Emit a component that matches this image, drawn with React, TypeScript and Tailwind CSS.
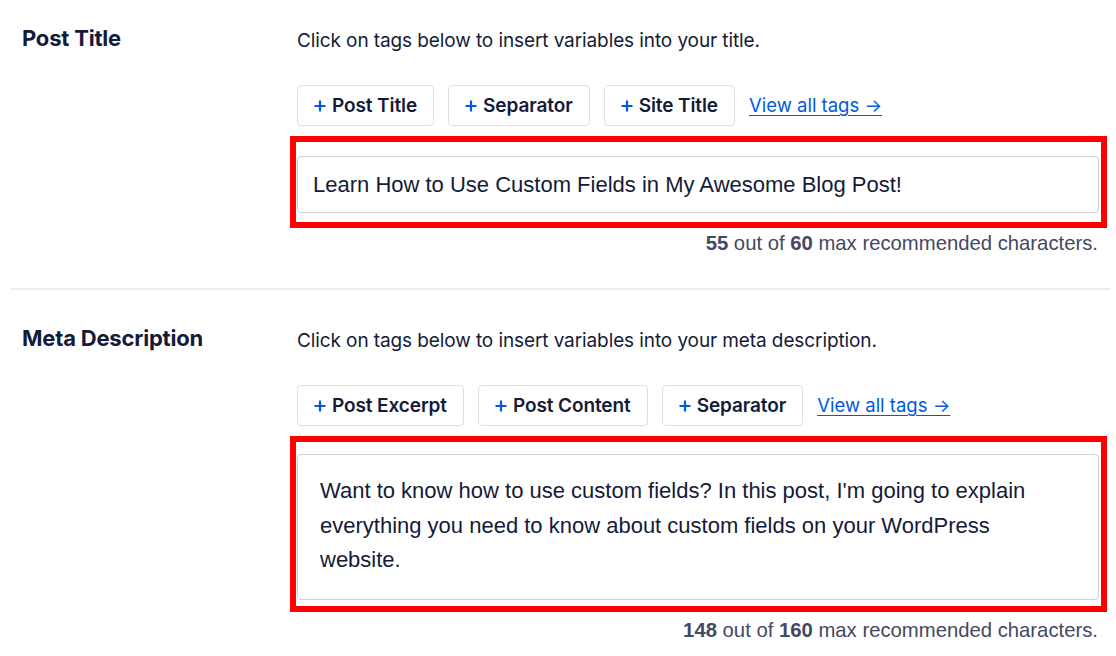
import React from 'react';

const sans = "font-['Inter','Noto_Sans',sans-serif]";
const helv = "font-['Liberation_Sans','Arial',sans-serif]";

function PlusIcon() {
  return (
    <svg viewBox="0 0 12 12" className="w-[12px] h-[12px] shrink-0" fill="none">
      <path d="M6 0.5v11M0.5 6h11" stroke="#005ae0" strokeWidth="2.2" strokeLinecap="butt" />
    </svg>
  );
}

function TagButton({ label }: { label: string }) {
  return (
    <button className="h-[41px] px-[16px] flex items-center gap-[6px] bg-white border border-[#dfe0e4] rounded-[4px] text-[19px] font-semibold text-[#141b38] tracking-[-0.1px]">
      <PlusIcon />
      <span className="pt-[2px]">{label}</span>
    </button>
  );
}

function Counter({ used, max }: { used: number; max: number }) {
  return (
    <p className={`${helv} text-[20.3px] leading-[24px] text-[#434960] text-right pr-[9px]`}>
      <b className="font-bold">{used}</b> out of <b className="font-bold">{max}</b> max recommended characters.
    </p>
  );
}

function Section({
  title,
  hint,
  tags,
  children,
}: {
  title: string;
  hint: string;
  tags: string[];
  children: React.ReactNode;
}) {
  return (
    <div className="flex pl-[22px] pr-[9px]">
      {/* Label column */}
      <div className="w-[268px] shrink-0">
        <h3 className="-mt-[2px] text-[22px] leading-[24px] font-bold text-[#141b38] tracking-[-0.2px]">{title}</h3>
      </div>

      {/* Field column */}
      <div className="flex-1">
        <p className="pl-[7px] text-[19px] leading-[24px] text-[#141b38] pt-[1px] tracking-[-0.1px]">{hint}</p>

        <div className="pl-[7px] mt-[32px] flex items-center gap-[14px]">
          {tags.map((tag) => (
            <TagButton key={tag} label={tag} />
          ))}
          <a href="#" className="text-[18.5px] text-[#005ae0] underline underline-offset-[3px] decoration-[1px]">
            View all tags →
          </a>
        </div>

        {children}
      </div>
    </div>
  );
}

export default function App() {
  return (
    <div className={`${sans} w-full h-[656px] bg-white overflow-hidden pt-[28px]`}>
      <Section
        title="Post Title"
        hint="Click on tags below to insert variables into your title."
        tags={['Post Title', 'Separator', 'Site Title']}
      >
        <div className="mt-[10px] border-[6px] border-[#ff0000] pt-[14px] pb-[9px] pl-[1px] pr-[2px]">
          <div
            className={`${helv} h-[57px] border border-[#cfd0d6] rounded-[4px] px-[15px] flex items-center text-[22px] text-[#141b38]`}
          >
            Learn How to Use Custom Fields in My Awesome Blog Post!
          </div>
        </div>
        <div className="mt-[3px]">
          <Counter used={55} max={60} />
        </div>
      </Section>

      <div className="mt-[33px] ml-[11px] mr-[6px] h-[2px] bg-[#ededf0]" />

      <div className="pt-[38px]">
        <Section
          title="Meta Description"
          hint="Click on tags below to insert variables into your meta description."
          tags={['Post Excerpt', 'Post Content', 'Separator']}
        >
          <div className="mt-[10px] border-[6px] border-[#ff0000] pt-[12px] pb-[6px] pl-[1px] pr-[2px]">
            <div
              className={`${helv} h-[146px] border border-[#cfd0d6] rounded-[4px] pl-[22px] pr-[50px] pt-[19px] text-[22px] leading-[34.5px] text-[#141b38]`}
            >
              Want to know how to use custom fields? In this post, I'm going to explain everything you need to know
              about custom fields on your WordPress website.
            </div>
          </div>
          <div className="mt-[6px]">
            <Counter used={148} max={160} />
          </div>
        </Section>
      </div>
    </div>
  );
}
